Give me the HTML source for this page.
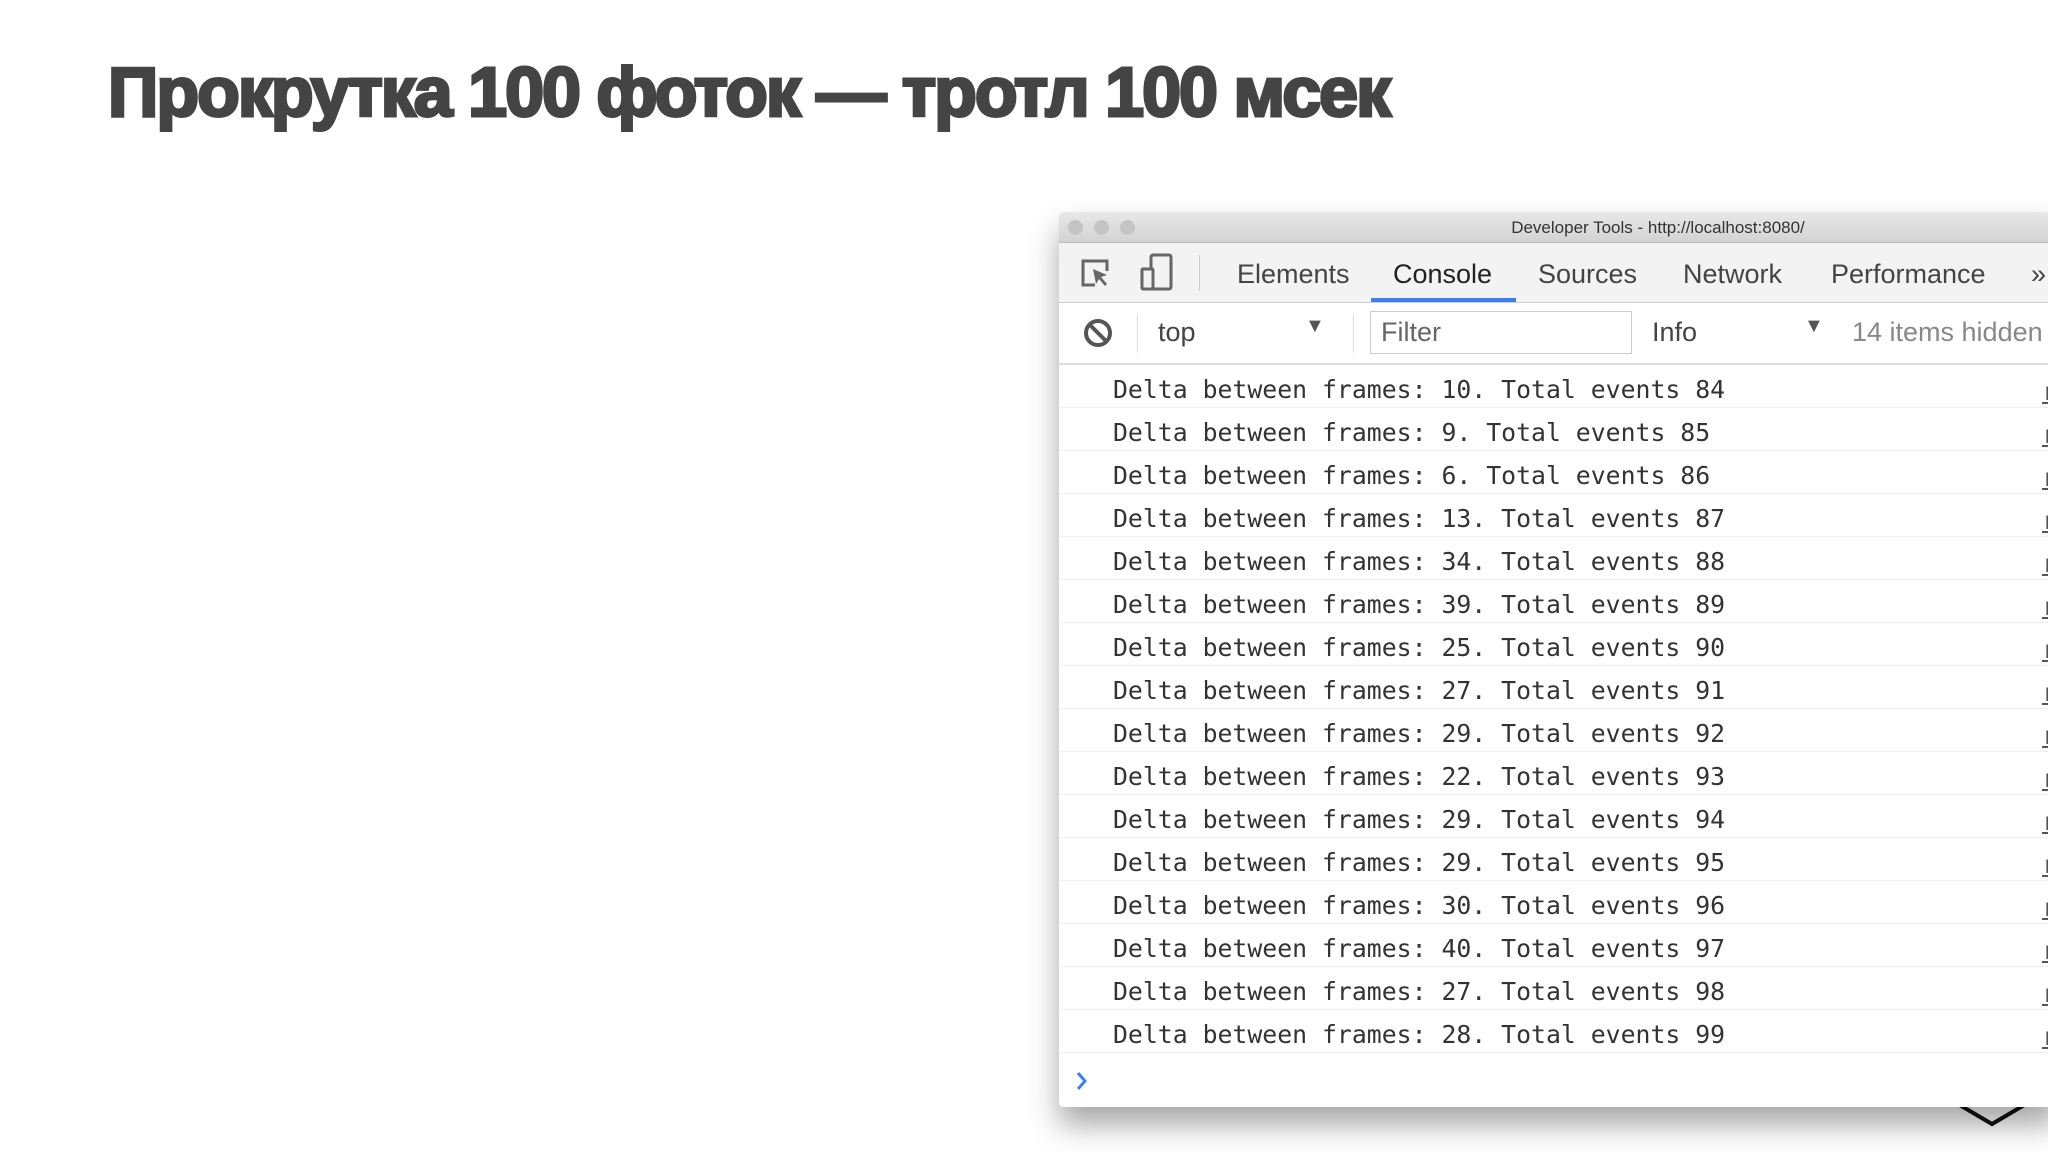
<!DOCTYPE html>
<html><head><meta charset="utf-8"><style>
body{margin:0;width:2048px;height:1152px;background:#fff;overflow:hidden;position:relative;font-family:"Liberation Sans",sans-serif}
.title{position:absolute;left:108px;top:52px;font-size:70px;font-weight:bold;color:#444;white-space:nowrap;-webkit-text-stroke:3px #444;letter-spacing:-2px}
.win{position:absolute;left:1059px;top:212px;width:1000px;height:895px;background:#fff;box-shadow:0 18px 30px rgba(0,0,0,.35);border-radius:6px 0 0 4px;overflow:hidden}
.tb{height:30px;background:linear-gradient(#e8e8e8,#d3d3d3);border-bottom:1px solid #bbb;position:relative}
.dot{position:absolute;top:8px;width:15px;height:15px;border-radius:50%;background:#c4c4c4}
.tbt{position:absolute;left:0;width:1198px;text-align:center;top:6px;font-size:17px;color:#333}
.tabs{position:absolute;top:31px;left:0;right:0;height:59px;background:#f3f3f3;border-bottom:1px solid #ccc}
.tab{position:absolute;top:16px;font-size:27px;color:#444}
.tools{position:absolute;top:91px;left:0;right:0;height:60px;background:#fff;border-bottom:2px solid #ddd}
.t{position:absolute;font-size:27px;color:#444}
.rows{position:absolute;top:153px;left:0;right:0}
.row{height:42px;border-bottom:1.5px solid #eee;position:relative;font-family:"DejaVu Sans Mono","Liberation Mono",monospace;font-size:24.8px;color:#333}
.row span{position:absolute;left:54px;top:10px;white-space:pre}
.row i{position:absolute;left:983px;top:12px;font-style:normal;text-decoration:underline;color:#555}
</style></head><body>
<div class="title">Прокрутка 100 фоток — тротл 100 мсек</div>
<svg style="position:absolute;left:1955px;top:1090px" width="80" height="40"><path d="M3 14 L37 34 L71 14" fill="none" stroke="#111" stroke-width="4"/></svg>
<div class="win">
<div class="tb"><div class="dot" style="left:9px"></div><div class="dot" style="left:35px"></div><div class="dot" style="left:61px"></div><div class="tbt">Developer Tools - http://localhost:8080/</div></div>
<div class="tabs">
<svg style="position:absolute;left:20px;top:14px" width="40" height="34"><path d="M16 28H4V4h24v10" fill="none" stroke="#666" stroke-width="3"/><path d="M14 12l14 6-6 2 6 7-2 2-6-7-3 5z" fill="#666"/></svg>
<svg style="position:absolute;left:80px;top:10px" width="36" height="40"><rect x="12" y="2" width="20" height="34" rx="2" fill="none" stroke="#666" stroke-width="3"/><rect x="3" y="16" width="11" height="20" rx="1" fill="#f3f3f3" stroke="#666" stroke-width="3"/></svg>
<div style="position:absolute;left:140px;top:12px;width:1px;height:36px;background:#ccc"></div>
<div class="tab" style="left:178px">Elements</div>
<div class="tab" style="left:334px;color:#222">Console</div>
<div class="tab" style="left:479px">Sources</div>
<div class="tab" style="left:624px">Network</div>
<div class="tab" style="left:772px">Performance</div>
<div class="tab" style="left:972px">»</div>
<div style="position:absolute;left:312px;width:145px;top:55px;height:4px;background:#3d7ef1"></div>
</div>
<div class="tools">
<svg style="position:absolute;left:23px;top:14px" width="32" height="32"><circle cx="16" cy="16" r="12" fill="none" stroke="#555" stroke-width="4"/><path d="M8 8L24 24" stroke="#555" stroke-width="4"/></svg>
<div style="position:absolute;left:78px;top:12px;width:1px;height:38px;background:#ddd"></div>
<div class="t" style="left:99px;top:14px">top</div>
<div class="t" style="left:246px;top:12px;font-size:20px;color:#555">▼</div>
<div style="position:absolute;left:294px;top:12px;width:1px;height:38px;background:#ddd"></div>
<div style="position:absolute;left:311px;top:8px;width:260px;height:41px;border:1.5px solid #ccc"></div>
<div class="t" style="left:322px;top:14px;color:#666">Filter</div>
<div class="t" style="left:593px;top:14px">Info</div>
<div class="t" style="left:745px;top:12px;font-size:20px;color:#555">▼</div>
<div class="t" style="left:793px;top:14px;color:#888">14 items hidden</div>
</div>
<div class="rows">
<div class="row"><span>Delta between frames: 10. Total events 84</span><i>r</i></div>
<div class="row"><span>Delta between frames: 9. Total events 85</span><i>r</i></div>
<div class="row"><span>Delta between frames: 6. Total events 86</span><i>r</i></div>
<div class="row"><span>Delta between frames: 13. Total events 87</span><i>r</i></div>
<div class="row"><span>Delta between frames: 34. Total events 88</span><i>r</i></div>
<div class="row"><span>Delta between frames: 39. Total events 89</span><i>r</i></div>
<div class="row"><span>Delta between frames: 25. Total events 90</span><i>r</i></div>
<div class="row"><span>Delta between frames: 27. Total events 91</span><i>r</i></div>
<div class="row"><span>Delta between frames: 29. Total events 92</span><i>r</i></div>
<div class="row"><span>Delta between frames: 22. Total events 93</span><i>r</i></div>
<div class="row"><span>Delta between frames: 29. Total events 94</span><i>r</i></div>
<div class="row"><span>Delta between frames: 29. Total events 95</span><i>r</i></div>
<div class="row"><span>Delta between frames: 30. Total events 96</span><i>r</i></div>
<div class="row"><span>Delta between frames: 40. Total events 97</span><i>r</i></div>
<div class="row"><span>Delta between frames: 27. Total events 98</span><i>r</i></div>
<div class="row"><span>Delta between frames: 28. Total events 99</span><i>r</i></div>
</div>
<svg style="position:absolute;left:16px;top:858px" width="14" height="22"><path d="M3 3l7 8-7 8" fill="none" stroke="#3d7ef1" stroke-width="3"/></svg>
</div>
</body></html>
